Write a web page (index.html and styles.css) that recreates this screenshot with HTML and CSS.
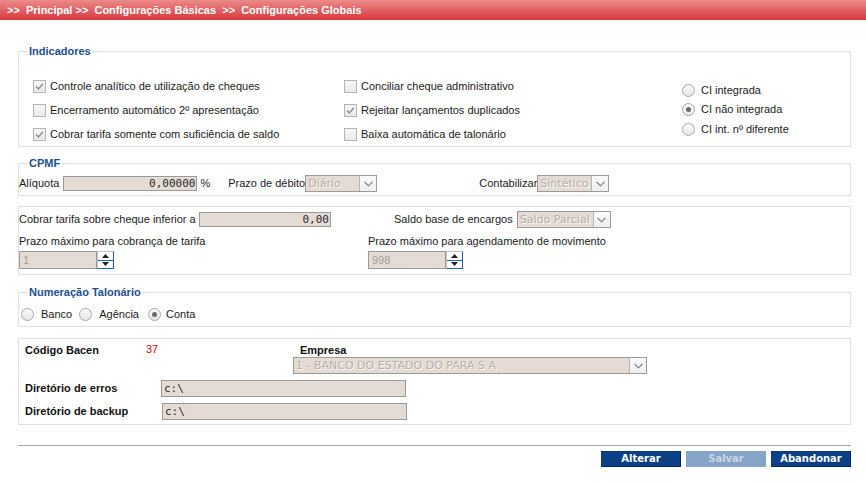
FILE: index.html
```html
<!DOCTYPE html>
<html lang="pt-BR">
<head>
<meta charset="utf-8">
<title>Configurações Globais</title>
<link rel="stylesheet" href="styles.css">
</head>
<body>
<div class="topbar">&gt;&gt;&nbsp; Principal &gt;&gt;&nbsp; Configurações Básicas&nbsp; &gt;&gt;&nbsp; Configurações Globais</div>
<main class="page">
  <fieldset class="group">
    <legend>Indicadores</legend>
    <div class="ind-body">
      <div class="col c1">
        <div class="opt"><span class="cb"><svg viewBox="0 0 11 11" width="11" height="11"><path d="M2 5.6l2.4 2.4 4.6-5.2" fill="none" stroke="#8f8f8f" stroke-width="1.4"/></svg></span>Controle analítico de utilização de cheques</div>
        <div class="opt"><span class="cb"></span>Encerramento automático 2º apresentação</div>
        <div class="opt"><span class="cb"><svg viewBox="0 0 11 11" width="11" height="11"><path d="M2 5.6l2.4 2.4 4.6-5.2" fill="none" stroke="#8f8f8f" stroke-width="1.4"/></svg></span>Cobrar tarifa somente com suficiência de saldo</div>
      </div>
      <div class="col c2">
        <div class="opt"><span class="cb"></span>Conciliar cheque administrativo</div>
        <div class="opt"><span class="cb"><svg viewBox="0 0 11 11" width="11" height="11"><path d="M2 5.6l2.4 2.4 4.6-5.2" fill="none" stroke="#8f8f8f" stroke-width="1.4"/></svg></span>Rejeitar lançamentos duplicados</div>
        <div class="opt"><span class="cb"></span>Baixa automática de talonário</div>
      </div>
      <div class="col c3">
        <div class="ropt"><span class="rd"></span>CI integrada</div>
        <div class="ropt"><span class="rd on"></span>CI não integrada</div>
        <div class="ropt"><span class="rd"></span>CI int. nº diferente</div>
      </div>
    </div>
  </fieldset>

  <fieldset class="group cpmf">
    <legend>CPMF</legend>
    <div class="cpmf-row">
      <span>Alíquota</span>
      <span class="inp num w-aliq">0,00000</span>
      <span class="pct">%</span>
      <span class="prazo">Prazo de débito</span>
      <div class="sel w72"><span class="val">Diário</span><span class="arr"><svg viewBox="0 0 9 6" width="9" height="6"><path d="M0.5 0.8l4 4 4-4" fill="none" stroke="#6b7684" stroke-width="1.1"/></svg></span></div>
      <span class="contab">Contabilizar</span>
      <div class="sel w72"><span class="val">Sintético</span><span class="arr"><svg viewBox="0 0 9 6" width="9" height="6"><path d="M0.5 0.8l4 4 4-4" fill="none" stroke="#6b7684" stroke-width="1.1"/></svg></span></div>
    </div>
  </fieldset>

  <div class="box b3">
    <div class="b3-row">
      <span class="l-cobrar">Cobrar tarifa sobre cheque inferior a</span>
      <span class="inp num w-cobrar">0,00</span>
      <span class="l-saldo">Saldo base de encargos</span>
      <div class="sel w94"><span class="val">Saldo Parcial</span><span class="arr"><svg viewBox="0 0 9 6" width="9" height="6"><path d="M0.5 0.8l4 4 4-4" fill="none" stroke="#6b7684" stroke-width="1.1"/></svg></span></div>
    </div>
    <div class="b3-cols">
      <div class="pcol pleft">
        <div class="plabel">Prazo máximo para cobrança de tarifa</div>
        <div class="spin"><span class="sinp">1</span><span class="sbtn"><span class="half up"><svg viewBox="0 0 7 4" width="7" height="4"><path d="M3.5 0L7 4H0z" fill="#222"/></svg></span><span class="half dn"><svg viewBox="0 0 7 4" width="7" height="4"><path d="M0 0h7L3.5 4z" fill="#222"/></svg></span></span></div>
      </div>
      <div class="pcol">
        <div class="plabel">Prazo máximo para agendamento de movimento</div>
        <div class="spin"><span class="sinp">998</span><span class="sbtn"><span class="half up"><svg viewBox="0 0 7 4" width="7" height="4"><path d="M3.5 0L7 4H0z" fill="#222"/></svg></span><span class="half dn"><svg viewBox="0 0 7 4" width="7" height="4"><path d="M0 0h7L3.5 4z" fill="#222"/></svg></span></span></div>
      </div>
    </div>
  </div>

  <fieldset class="group talao">
    <legend>Numeração Talonário</legend>
    <div class="talao-row">
      <div class="topt"><span class="rd"></span>Banco</div>
      <div class="topt"><span class="rd"></span>Agência</div>
      <div class="topt t3"><span class="rd on"></span>Conta</div>
    </div>
  </fieldset>

  <div class="box b4">
    <div class="b4-head">
      <span class="b4-lbl strong">Código Bacen</span>
      <span class="bacen">37</span>
      <span class="strong">Empresa</span>
    </div>
    <div class="sel w-emp"><span class="val">1 - BANCO DO ESTADO DO PARA S A</span><span class="arr"><svg viewBox="0 0 9 6" width="9" height="6"><path d="M0.5 0.8l4 4 4-4" fill="none" stroke="#6b7684" stroke-width="1.1"/></svg></span></div>
    <div class="dir-row">
      <span class="dir-lbl strong">Diretório de erros</span>
      <span class="inp txt w-dir">c:\</span>
    </div>
    <div class="dir-row">
      <span class="dir-lbl strong">Diretório de backup</span>
      <span class="inp txt w-dir shift">c:\</span>
    </div>
  </div>

  <div class="rule"></div>
  <div class="actions">
    <span class="btn">Alterar</span>
    <span class="btn off">Salvar</span>
    <span class="btn">Abandonar</span>
  </div>
</main>
</body>
</html>
```

FILE: styles.css
```css
* { box-sizing: border-box; }

body {
  margin: 0;
  background: #fff;
  color: #1a1a1a;
  font-family: "Liberation Sans", Arial, sans-serif;
  font-size: 11px;
  line-height: 13px;
}

.topbar {
  height: 20px;
  padding-left: 7px;
  background: linear-gradient(#ec8b8b, #d8363b);
  color: #fff;
  font-weight: bold;
  line-height: 21px;
  white-space: nowrap;
}

.page {
  padding: 25px 15px 0 18px;
}

.group {
  margin: 0;
  padding: 0;
  min-width: 0;
  border: 1px solid #e1e1e1;
}

.group legend {
  margin-left: 9px;
  padding: 0 1px;
  color: #1b4f93;
  font-weight: bold;
  line-height: 13px;
}

.box {
  border: 1px solid #e1e1e1;
}

/* Indicadores */
.ind-body {
  display: flex;
  padding: 16px 0 0 14px;
}

.c1 { width: 311px; }
.c2 { width: 338px; }
.c3 { padding-top: 6.5px; }

.opt {
  display: flex;
  align-items: center;
  height: 24px;
  white-space: nowrap;
}

.cb {
  display: inline-flex;
  align-items: center;
  justify-content: center;
  width: 13px;
  height: 13px;
  margin-right: 4px;
  border: 1px solid #b4b4b4;
  background: linear-gradient(#f7f7f7, #e9e9e9);
  flex: none;
}

.ropt {
  display: flex;
  align-items: center;
  height: 19.5px;
  white-space: nowrap;
}

.rd {
  position: relative;
  display: inline-block;
  width: 13px;
  height: 13px;
  margin-right: 6px;
  border: 1px solid #a9a9a9;
  border-radius: 50%;
  background: linear-gradient(#fbfbfb, #e6e6e6);
  flex: none;
}

.rd.on::after {
  content: "";
  position: absolute;
  left: 3px;
  top: 3px;
  width: 5px;
  height: 5px;
  border-radius: 50%;
  background: #6a6a6a;
}

/* CPMF */
.cpmf {
  margin-top: 10px;
}

.cpmf-row {
  display: flex;
  align-items: center;
  height: 17px;
  margin: 5px 0 3px;
  white-space: nowrap;
}

.inp {
  display: inline-block;
  height: 15px;
  border: 1px solid #9a9a9a;
  background: #e4dcd4;
  font-family: "DejaVu Sans Mono", "Liberation Mono", monospace;
  font-size: 11px;
  line-height: 13px;
  color: #2a2a2a;
}

.inp.num {
  text-align: right;
  padding-right: 1px;
}

.inp.txt {
  height: 17px;
  line-height: 15px;
  padding-left: 2px;
}

.w-aliq { width: 134px; margin-left: 4px; }
.pct { margin-left: 3px; }
.prazo { margin-left: 18px; }
.contab { margin-left: 102px; }

.sel {
  display: flex;
  height: 17px;
  border: 1px solid #9a9a9a;
  background: #e4dcd4;
  font-family: "DejaVu Sans", Verdana, sans-serif;
  font-size: 11px;
  line-height: 15px;
  color: #b5aea7;
  text-shadow: 1px 1px 0 #fbf8f5;
  white-space: nowrap;
  overflow: hidden;
}

.sel .val {
  flex: 1;
  padding-left: 2px;
  overflow: hidden;
}

.sel .arr {
  display: flex;
  align-items: center;
  justify-content: center;
  width: 17px;
  border-left: 1px solid #b5b5b5;
  background: linear-gradient(#fbfbfb, #eeeeee);
  flex: none;
}

.w72 { width: 72px; }
.w94 { width: 94px; margin-left: 4px; }

/* Box 3 */
.b3 {
  margin-top: 10px;
  padding-bottom: 5px;
}

.b3-row {
  display: flex;
  align-items: center;
  height: 17px;
  margin-top: 4px;
  white-space: nowrap;
}

.l-cobrar { width: 180px; }
.w-cobrar { width: 132px; }
.l-saldo { margin-left: 63px; }

.b3-cols {
  display: flex;
  margin-top: 7px;
}

.pleft { width: 349px; }

.plabel {
  height: 13px;
  white-space: nowrap;
}

.spin {
  display: flex;
  height: 18px;
  margin-top: 3px;
}

.sinp {
  width: 78px;
  height: 18px;
  padding-left: 3px;
  border: 1px solid #9a9a9a;
  background: #e4dcd4;
  color: #9e9e9e;
  line-height: 16px;
}

.sbtn {
  display: flex;
  flex-direction: column;
  width: 17px;
  height: 18px;
  border: 1px solid #1f5fb0;
  border-top-color: #c4c4c4;
  border-left-color: #c4c4c4;
  background: #fff;
}

.half {
  display: flex;
  align-items: center;
  justify-content: center;
  flex: 1;
}

.half.up {
  border-bottom: 1px solid #1f5fb0;
}

/* Numeração */
.talao {
  margin-top: 11px;
}

.talao-row {
  display: flex;
  align-items: center;
  height: 16px;
  margin: 7px 0 4px 2px;
}

.topt {
  display: flex;
  align-items: center;
  margin-right: 7px;
}

.topt .rd { margin-right: 7px; }
.topt.t3 { margin-left: 2px; }
.topt.t3 .rd { margin-right: 5px; }

/* Box 4 */
.b4 {
  margin-top: 11px;
  padding: 4px 0 4px 0;
}

.strong {
  font-weight: bold;
  color: #111;
}

.b4-head {
  display: flex;
  align-items: center;
  height: 14px;
  padding-left: 6px;
  white-space: nowrap;
}

.b4-lbl { width: 121px; }

.bacen {
  width: 154px;
  color: #e60000;
  margin-top: -2px;
}

.w-emp {
  width: 354px;
  margin: 0 0 0 274px;
}

.dir-row {
  display: flex;
  align-items: center;
  height: 17px;
  margin-top: 6px;
  padding-left: 6px;
  white-space: nowrap;
}

.dir-lbl { width: 136px; }
.w-dir { width: 245px; }
.w-dir.shift { margin-left: 1px; }

/* Actions */
.rule {
  height: 1px;
  margin-top: 20px;
  background: #a8a8a8;
}

.actions {
  display: flex;
  justify-content: flex-end;
  gap: 5px;
  margin-top: 5px;
}

.btn {
  display: inline-block;
  width: 80px;
  height: 16px;
  border: 1px solid #0c3a7c;
  border-right-color: #06244f;
  border-bottom-color: #06244f;
  background: #0d3f86;
  color: #fff;
  font-family: "DejaVu Sans", Verdana, sans-serif;
  font-size: 10px;
  font-weight: bold;
  line-height: 14px;
  text-align: center;
}

.btn.off {
  border-color: #87a5c9;
  background: #85a4c8;
  color: #c9d6e7;
}
```
